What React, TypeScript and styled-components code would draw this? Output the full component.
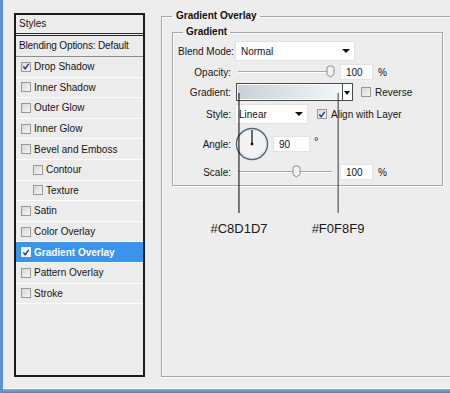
import React from "react";
import styled, { createGlobalStyle } from "styled-components";

const GlobalStyle = createGlobalStyle`
  html, body {
    margin: 0;
    padding: 0;
    background: #ededed;
  }
  body {
    font-family: "Liberation Sans", Arial, sans-serif;
    font-size: 10px;
    color: #151515;
  }
`;

const styleItems = [
  { name: "Drop Shadow", on: true },
  { name: "Inner Shadow" },
  { name: "Outer Glow" },
  { name: "Inner Glow" },
  { name: "Bevel and Emboss" },
  { name: "Contour", sub: true },
  { name: "Texture", sub: true },
  { name: "Satin" },
  { name: "Color Overlay" },
  { name: "Gradient Overlay", on: true, sel: true },
  { name: "Pattern Overlay" },
  { name: "Stroke" },
];

function CheckBox({ on, sel }: { on?: boolean; sel?: boolean }) {
  return (
    <Box $sel={sel}>
      {on && (
        <svg width="9" height="9" viewBox="0 0 9 9">
          <path d="M1.5 4.5 L3.6 7 L7.6 1.5" fill="none" stroke={sel ? "#1d3f8f" : "#253c88"} strokeWidth="1.6" />
        </svg>
      )}
    </Box>
  );
}

function Slider({ pos }: { pos: number }) {
  return (
    <SliderWrap>
      <Track />
      <Thumb style={{ left: `${pos * 92 - 1}px` }}>
        <svg width="9" height="13" viewBox="0 0 9 13">
          <path d="M1 3.5 Q1 1 3.5 1 H5.5 Q8 1 8 3.5 V9.5 L4.5 12 L1 9.5 Z" fill="#f1f1f1" stroke="#8a8a8a" />
        </svg>
      </Thumb>
    </SliderWrap>
  );
}

function Dial() {
  return (
    <DialWrap>
      <svg width="34" height="34" viewBox="0 0 34 34">
        <circle cx="17" cy="17" r="15.5" fill="#f3f3f3" stroke="#54627a" strokeWidth="1.4" />
        <circle cx="17" cy="17" r="14.3" fill="none" stroke="#c9d0dc" strokeWidth="0.8" />
        <line x1="17" y1="17" x2="17" y2="3" stroke="#111" strokeWidth="1.2" />
        <circle cx="17" cy="17" r="1.4" fill="#111" />
      </svg>
    </DialWrap>
  );
}

export default function App() {
  return (
    <>
      <GlobalStyle />
      <Window>
        <Body>
          <LeftPane>
            <StylesBox>
              <Header>Styles</Header>
              <BlendRow>Blending Options: Default</BlendRow>
              {styleItems.map((it) => (
                <Item key={it.name} $sub={it.sub} $sel={it.sel}>
                  <CheckBox on={it.on} sel={it.sel} />
                  <span>{it.name}</span>
                </Item>
              ))}
            </StylesBox>
          </LeftPane>

          <RightPane>
            <OuterGroup>
              <Legend>Gradient Overlay</Legend>
              <InnerGroup>
                <Legend>Gradient</Legend>

                <Row $h={20}>
                  <Label>Blend Mode:</Label>
                  <Select $w={120}>Normal</Select>
                </Row>

                <Row $h={16}>
                  <Label>Opacity:</Label>
                  <Slider pos={1} />
                  <NumInput $w={33}>100</NumInput>
                  <Unit>%</Unit>
                </Row>

                <Row $h={18}>
                  <Label>Gradient:</Label>
                  <GradientPicker>
                    <GradientBar />
                    <DropButton />
                  </GradientPicker>
                  <Option $ml={8}>
                    <CheckBox />
                    <span>Reverse</span>
                  </Option>
                </Row>

                <Row $h={20}>
                  <Label>Style:</Label>
                  <Select $w={73} $pl={3}>Linear</Select>
                  <Option $ml={9}>
                    <CheckBox on />
                    <span>Align with Layer</span>
                  </Option>
                </Row>

                <Row $h={34}>
                  <Label>Angle:</Label>
                  <Dial />
                  <NumInput $w={37}>90</NumInput>
                  <Degree>°</Degree>
                </Row>

                <Row $h={16}>
                  <Label>Scale:</Label>
                  <Slider pos={0.63} />
                  <NumInput $w={33}>100</NumInput>
                  <Unit>%</Unit>
                </Row>
              </InnerGroup>
            </OuterGroup>

            <Callout $x={78}>
              <Pointer />
              <Hex>#C8D1D7</Hex>
            </Callout>
            <Callout $x={177}>
              <Pointer $grey />
              <Hex>#F0F8F9</Hex>
            </Callout>
          </RightPane>
        </Body>
        <BottomBar />
      </Window>
    </>
  );
}

const Window = styled.div`
  width: 450px;
  height: 393px;
  box-sizing: border-box;
  display: flex;
  flex-direction: column;
  border-left: 3px solid #5d8fd2;
  background: #ededed;
  overflow: hidden;
`;

const Body = styled.div`
  flex: 1;
  display: flex;
  min-height: 0;
`;

const BottomBar = styled.div`
  height: 4px;
  border-top: 1px solid #fff;
  background: linear-gradient(#86aee3, #4e80c6);
`;

const LeftPane = styled.div`
  width: 158px;
  flex-shrink: 0;
  padding: 13px 0 0 11px;
  box-sizing: border-box;
`;

const StylesBox = styled.div`
  width: 131px;
  height: 364px;
  box-sizing: border-box;
  border: 2px solid #1b1b1b;
  background: #ececec;
  display: flex;
  flex-direction: column;
`;

const Header = styled.div`
  height: 21px;
  line-height: 18px;
  padding-left: 3px;
  box-sizing: border-box;
  border-bottom: 3px double #2a2a2a;
`;

const BlendRow = styled.div`
  height: 21px;
  line-height: 20px;
  padding-left: 3px;
  box-sizing: border-box;
  border-bottom: 1px solid #8c8c8c;
  letter-spacing: -0.15px;
`;

const Item = styled.div<{ $sub?: boolean; $sel?: boolean }>`
  height: 20.6px;
  box-sizing: border-box;
  display: flex;
  align-items: center;
  gap: 3px;
  padding-left: ${({ $sub }) => ($sub ? 17 : 5)}px;
  border-bottom: 1px solid #fbfbfb;
  background: ${({ $sel }) => ($sel ? "#3a94ee" : "transparent")};
  color: ${({ $sel }) => ($sel ? "#fff" : "#151515")};
  font-weight: ${({ $sel }) => ($sel ? "bold" : "normal")};
`;

const Box = styled.span<{ $sel?: boolean }>`
  width: 10px;
  height: 10px;
  box-sizing: border-box;
  flex-shrink: 0;
  display: inline-flex;
  align-items: center;
  justify-content: center;
  border: 1px solid ${({ $sel }) => ($sel ? "#e8eef8" : "#999")};
  background: ${({ $sel }) =>
    $sel ? "#f4f6fa" : "linear-gradient(135deg, #d6d6d6, #f7f7f7)"};
`;

const RightPane = styled.div`
  position: relative;
  flex: 1;
  min-width: 0;
`;

const OuterGroup = styled.fieldset`
  margin: 10px -30px 0 0;
  padding: 0 0 0 10px;
  height: 367px;
  box-sizing: border-box;
  border: 1px solid #a6a6a6;
  border-right: none;
  box-shadow: inset 1px 1px 0 #fdfdfd, 0 1px 0 #fdfdfd;
`;

const Legend = styled.legend`
  padding: 0 3px 0 4px;
  margin-left: 0;
  line-height: 12px;
  font-weight: bold;
  color: #111;
`;

const InnerGroup = styled.fieldset`
  width: 271px;
  height: 160px;
  margin: 4px 0 0 0;
  padding: 3px 0 0 5px;
  box-sizing: border-box;
  border: 1px solid #a6a6a6;
  box-shadow: inset 1px 1px 0 #fdfdfd, 1px 1px 0 #fdfdfd;
  display: flex;
  flex-direction: column;
  gap: 3px;

  & > legend {
    margin-left: 5px;
    padding: 0 3px;
  }
`;

const Row = styled.div<{ $h: number }>`
  height: ${({ $h }) => $h}px;
  display: flex;
  align-items: center;
`;

const Label = styled.div`
  width: 53px;
  margin-right: 4px;
  flex-shrink: 0;
  text-align: right;
  white-space: nowrap;
`;

const Select = styled.div<{ $w: number; $pl?: number }>`
  position: relative;
  width: ${({ $w }) => $w}px;
  height: 100%;
  box-sizing: border-box;
  padding-left: ${({ $pl }) => $pl ?? 5}px;
  display: flex;
  align-items: center;
  background: #fff;
  border: 1px solid #e2e2e2;

  &::after {
    content: "";
    position: absolute;
    right: 4px;
    top: 50%;
    margin-top: -2px;
    border-left: 4px solid transparent;
    border-right: 4px solid transparent;
    border-top: 4px solid #111;
  }
`;

const SliderWrap = styled.div`
  position: relative;
  width: 101px;
  height: 100%;
  flex-shrink: 0;
`;

const Track = styled.div`
  position: absolute;
  left: 3px;
  right: 4px;
  top: 7px;
  height: 1px;
  background: #a9a9a9;
  border-bottom: 1px solid #fff;
`;

const Thumb = styled.div`
  position: absolute;
  top: 1px;
  width: 9px;
  height: 13px;
  line-height: 0;
`;

const NumInput = styled.div<{ $w: number }>`
  width: ${({ $w }) => $w}px;
  height: 16px;
  box-sizing: border-box;
  margin-left: 4px;
  padding-left: 5px;
  display: flex;
  align-items: center;
  background: #fff;
  border: 1px solid #e4e4e4;
`;

const Unit = styled.span`
  margin-left: 5px;
`;

const Degree = styled.span`
  margin-left: 4px;
  align-self: flex-start;
  margin-top: 8px;
  font-size: 11px;
`;

const GradientPicker = styled.div`
  display: flex;
  height: 100%;
  margin-left: 1px;
  box-sizing: border-box;
  border: 1px solid #4a4a4a;
`;

const GradientBar = styled.div`
  width: 104px;
  background: linear-gradient(to right, #c8d1d7, #f0f8f9);
  border: 1px solid #fff;
  border-right: none;
`;

const DropButton = styled.div`
  position: relative;
  width: 9px;
  background: #fff;
  border-left: 1px solid #4a4a4a;

  &::after {
    content: "";
    position: absolute;
    left: 1px;
    top: 7px;
    border-left: 3.5px solid transparent;
    border-right: 3.5px solid transparent;
    border-top: 4px solid #111;
  }
`;

const Option = styled.label<{ $ml: number }>`
  display: flex;
  align-items: center;
  gap: 4px;
  margin-left: ${({ $ml }) => $ml}px;
`;

const DialWrap = styled.div`
  width: 34px;
  height: 34px;
  line-height: 0;
  flex-shrink: 0;
`;

const Callout = styled.div<{ $x: number }>`
  position: absolute;
  left: ${({ $x }) => $x}px;
  top: 93px;
  transform: translateX(-50%);
  display: flex;
  flex-direction: column;
  align-items: center;
`;

const Pointer = styled.div<{ $grey?: boolean }>`
  width: 1px;
  height: 120px;
  background: ${({ $grey }) => ($grey ? "#3a3a3a" : "#000")};
`;

const Hex = styled.div`
  margin-top: 8px;
  font-size: 13px;
  line-height: 15px;
  color: #1a1a1a;
`;
